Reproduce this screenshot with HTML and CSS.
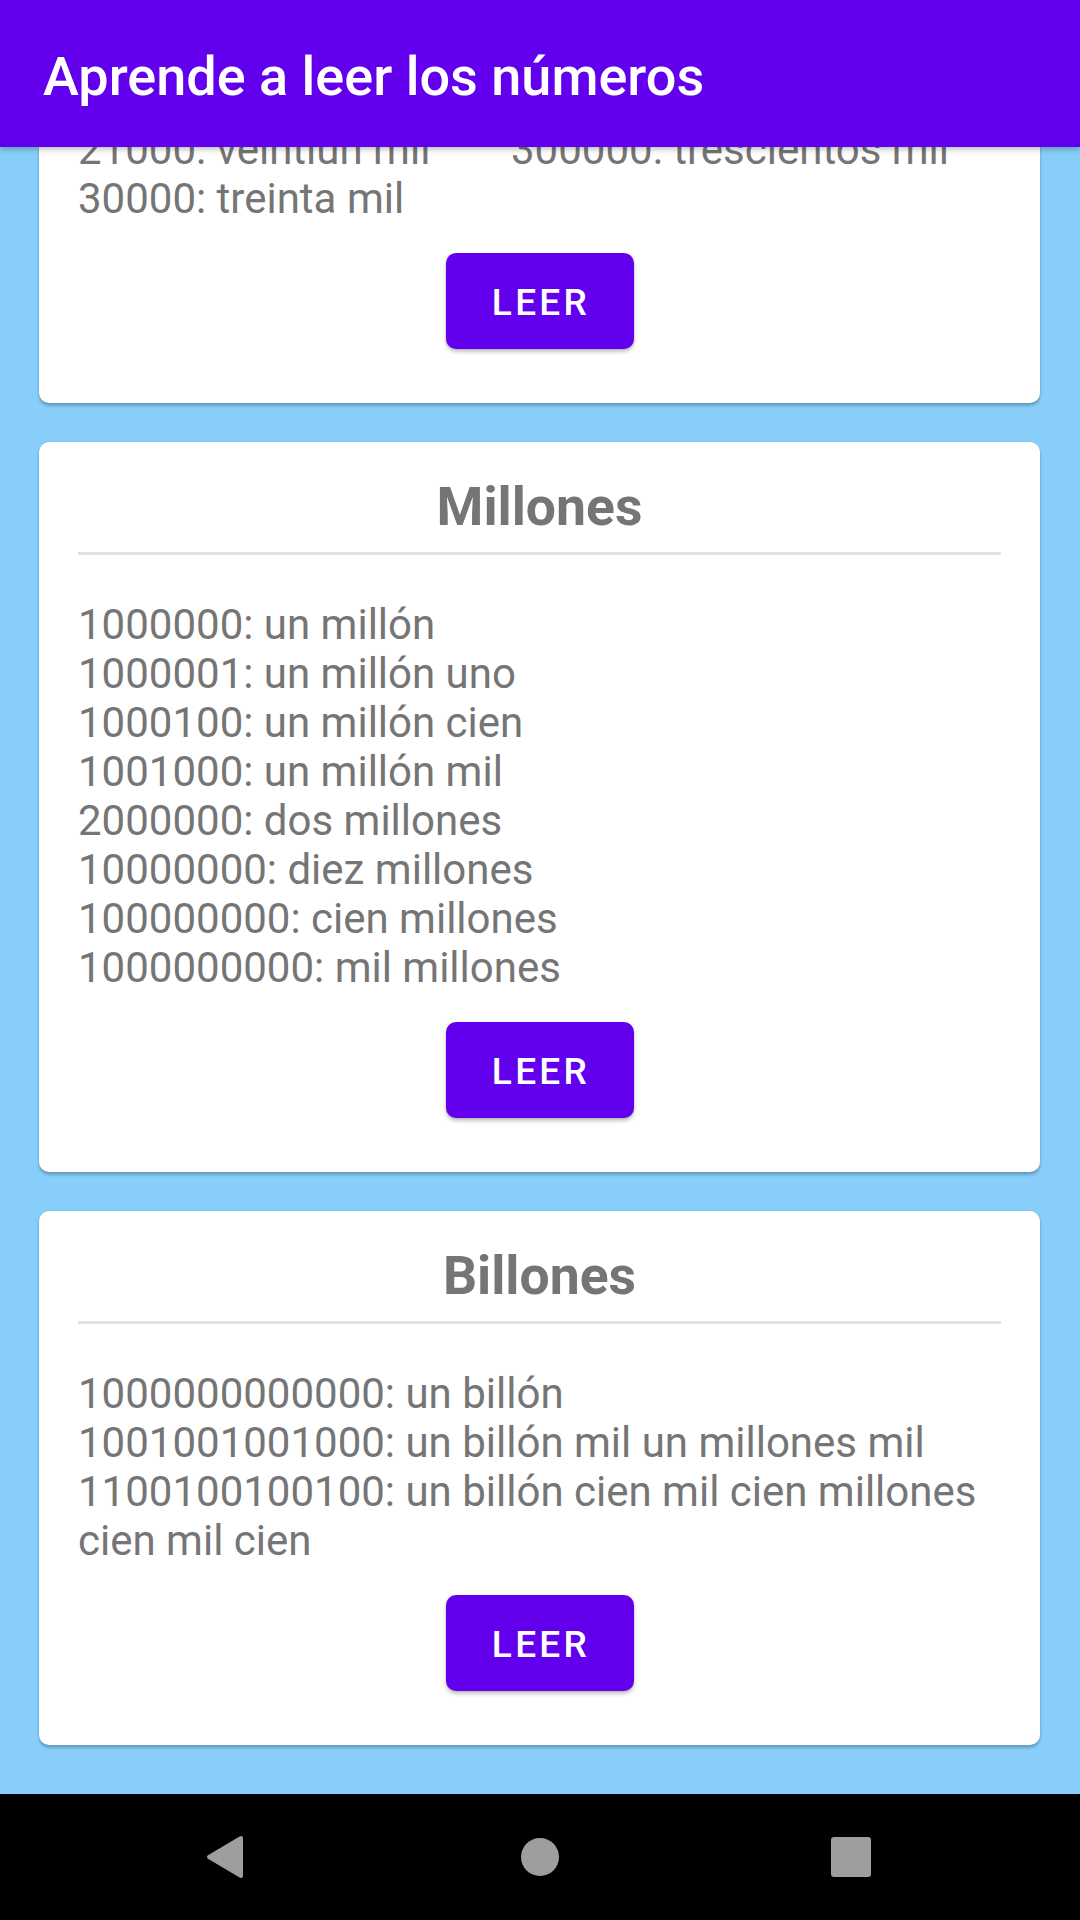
FILE: index.html
```html
<!DOCTYPE html>
<html lang="es">
<head>
<meta charset="utf-8">
<title>Aprende a leer los números</title>
<link rel="stylesheet" href="styles.css">
</head>
<body>
<div class="screen">
  <header class="appbar">
    <h1 class="appbar-title">Aprende a leer los números</h1>
  </header>
  <main class="scroll">
    <div class="cards">
      <section class="card card-scrolled">
        <h2 class="card-title">Miles</h2>
        <hr class="divider">
        <div class="list list-two-col">
          <div class="row">1000: mil</div>
          <div class="row">1001: mil uno</div>
          <div class="row">1100: mil cien</div>
          <div class="row">2000: dos mil</div>
          <div class="row">10000: diez mil</div>
          <div class="row">21000: veintiún mil</div>
          <div class="row">30000: treinta mil</div>
          <div class="row">100000: cien mil</div>
          <div class="row">100001: cien mil uno</div>
          <div class="row">101000: ciento un mil</div>
          <div class="row">110000: ciento diez mil</div>
          <div class="row">200000: doscientos mil</div>
          <div class="row">300000: trescientos mil</div>
        </div>
        <div class="actions"><button class="btn">LEER</button></div>
      </section>

      <section class="card">
        <h2 class="card-title">Millones</h2>
        <hr class="divider">
        <div class="list">
          <div class="row">1000000: un millón</div>
          <div class="row">1000001: un millón uno</div>
          <div class="row">1000100: un millón cien</div>
          <div class="row">1001000: un millón mil</div>
          <div class="row">2000000: dos millones</div>
          <div class="row">10000000: diez millones</div>
          <div class="row">100000000: cien millones</div>
          <div class="row">1000000000: mil millones</div>
        </div>
        <div class="actions"><button class="btn">LEER</button></div>
      </section>

      <section class="card">
        <h2 class="card-title">Billones</h2>
        <hr class="divider">
        <div class="list">
          <div class="row">1000000000000: un billón</div>
          <div class="row">1001001001000: un billón mil un millones mil</div>
          <div class="row">1100100100100: un billón cien mil cien millones cien mil cien</div>
        </div>
        <div class="actions"><button class="btn">LEER</button></div>
      </section>
    </div>
  </main>
  <nav class="navbar">
    <svg class="nav-icon" width="60" height="60" viewBox="0 0 60 60" aria-label="Atrás">
      <polygon points="42,11 42,49 10,30" fill="#9e9e9e" stroke="#9e9e9e" stroke-width="4" stroke-linejoin="round"/>
    </svg>
    <svg class="nav-icon" width="60" height="60" viewBox="0 0 60 60" aria-label="Inicio">
      <circle cx="30" cy="30" r="19" fill="#9e9e9e"/>
    </svg>
    <svg class="nav-icon" width="60" height="60" viewBox="0 0 60 60" aria-label="Recientes">
      <rect x="10" y="10" width="40" height="40" rx="3" fill="#9e9e9e"/>
    </svg>
  </nav>
</div>
</body>
</html>
```

FILE: styles.css
```css
* {
  box-sizing: border-box;
}

html, body {
  margin: 0;
  padding: 0;
}

body {
  width: 1080px;
  height: 1920px;
  overflow: hidden;
  background: #87cefa;
  font-family: Roboto, "Noto Sans", "Liberation Sans", sans-serif;
}

.screen {
  display: flex;
  flex-direction: column;
  height: 1920px;
}

.appbar {
  position: relative;
  z-index: 2;
  height: 147px;
  flex: 0 0 147px;
  background: #6200ee;
  display: flex;
  align-items: center;
  padding: 5px 0 0 43px;
  box-shadow: 0 2px 6px rgba(0, 0, 0, 0.28);
}

.appbar-title {
  margin: 0;
  color: #ffffff;
  font-size: 54px;
  font-weight: 500;
  line-height: 63px;
  letter-spacing: 0;
}

.scroll {
  flex: 1 1 auto;
  overflow: hidden;
}

.cards {
  display: flex;
  flex-direction: column;
  gap: 39px;
  padding: 0 40px 0 39px;
}

.card {
  background: #ffffff;
  border-radius: 10px;
  padding: 34px 39px 54px 39px;
  box-shadow: 0 3px 3px rgba(0, 0, 0, 0.22), 0 0 2px rgba(0, 0, 0, 0.12);
}

/* scroll position of the list: first card partly scrolled away */
.card-scrolled {
  margin-top: -425px;
}

.card-title {
  margin: 0;
  text-align: center;
  color: #757575;
  font-size: 53.5px;
  font-weight: 700;
  line-height: 61px;
}

.divider {
  margin: 15px 0 0;
  border: 0;
  height: 3px;
  background: #e2e2e2;
}

.list {
  margin-top: 45px;
  color: #757575;
  font-size: 42px;
  font-weight: 400;
  line-height: 49px;
}

.list-two-col {
  display: grid;
  grid-template-columns: 433px 1fr;
  grid-template-rows: repeat(7, 49px);
  grid-auto-flow: column;
}

.list-two-col .row {
  white-space: nowrap;
}

.actions {
  display: flex;
  justify-content: center;
  margin-top: 30px;
}

.btn {
  width: 188px;
  height: 96px;
  border: 0;
  border-radius: 10px;
  background: #6200ee;
  color: #ffffff;
  font-family: Roboto, "Noto Sans", "Liberation Sans", sans-serif;
  font-size: 37px;
  font-weight: 500;
  letter-spacing: 3.3px;
  padding: 2px 0 0 3px;
  box-shadow: 0 3px 4px rgba(0, 0, 0, 0.22), 0 1px 2px rgba(0, 0, 0, 0.12);
}

.navbar {
  flex: 0 0 126px;
  height: 126px;
  background: #000000;
  display: flex;
  align-items: center;
  justify-content: center;
  gap: 251px;
}

.nav-icon {
  display: block;
}
```
